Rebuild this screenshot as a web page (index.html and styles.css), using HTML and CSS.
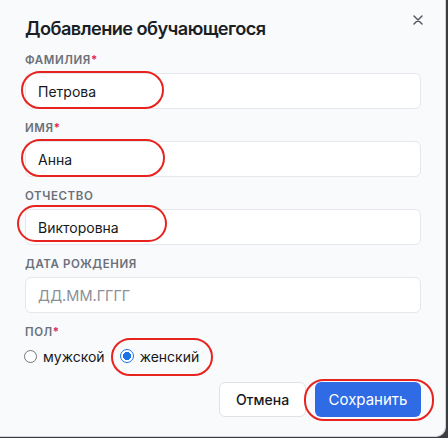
FILE: index.html
```html
<!DOCTYPE html>
<html lang="ru">
<head>
<meta charset="utf-8">
<title>Добавление обучающегося</title>
<link rel="stylesheet" href="styles.css">
</head>
<body>
<div class="modal">
  <div class="header">
    <h2 class="title">Добавление обучающегося</h2>
    <button class="close" aria-label="Закрыть">
      <svg width="10" height="10" viewBox="0 0 10 10"><path d="M1 1L9 9M9 1L1 9" stroke="#55595f" stroke-width="1.5" stroke-linecap="round"/></svg>
    </button>
  </div>
  <div class="field">
    <label class="label">Фамилия<span class="req">*</span></label>
    <div class="input">Петрова</div>
  </div>
  <div class="field">
    <label class="label">Имя<span class="req">*</span></label>
    <div class="input">Анна</div>
  </div>
  <div class="field">
    <label class="label">Отчество</label>
    <div class="input">Викторовна</div>
  </div>
  <div class="field">
    <label class="label">Дата рождения</label>
    <div class="input placeholder">ДД.ММ.ГГГГ</div>
  </div>
  <div class="field gender">
    <label class="label">Пол<span class="req">*</span></label>
    <div class="radios">
      <label class="radio"><span class="dot"></span>мужской</label>
      <label class="radio checked"><span class="dot"></span>женский</label>
    </div>
  </div>
  <div class="actions">
    <button class="btn cancel">Отмена</button>
    <button class="btn save">Сохранить</button>
  </div>

  <span class="mark m1"></span>
  <span class="mark m2"></span>
  <span class="mark m3"></span>
  <span class="mark m4"></span>
  <span class="mark m5"></span>
</div>
</body>
</html>
```
FILE: styles.css
```css
* { box-sizing: border-box; }
html, body { margin: 0; }
body {
  background: #3b3d42;
  width: 448px;
  height: 438px;
  overflow: hidden;
  font-family: Inter, "Noto Sans", sans-serif;
}
.modal {
  position: relative;
  width: 446px;
  height: 437px;
  background: #f8fafc;
  border-right: 1px solid #cfd4dc;
  border-bottom: 1px solid #cfd4dc;
  border-bottom-right-radius: 10px;
  padding: 14px 24px 0 25px;
}
.header {
  display: flex;
  justify-content: space-between;
  align-items: flex-start;
  height: 28px;
  margin-bottom: 10px;
}
.title {
  margin: 0;
  font-size: 18.2px;
  line-height: 28px;
  font-weight: 600;
  color: #1b1f24;
  letter-spacing: -0.55px;
}
.close {
  border: 0;
  background: none;
  padding: 0;
  width: 10px;
  height: 10px;
  margin-top: 1px;
  margin-right: -2px;
  display: flex;
}
.field {
  display: flex;
  flex-direction: column;
  gap: 5px;
  margin-bottom: 11px;
}
.label {
  font-size: 11.5px;
  line-height: 16px;
  font-weight: 600;
  text-transform: uppercase;
  letter-spacing: 0.6px;
  color: #6b7079;
}
.req { color: #e11d48; }
.input {
  height: 36px;
  background: #ffffff;
  border: 1px solid #e4e7ec;
  border-radius: 6px;
  padding: 0 12px;
  display: flex;
  align-items: center;
  font-size: 14px;
  color: #16181c;
}
.placeholder { color: #8a8f98; font-size: 14.5px; }
.gender { gap: 6px; margin-bottom: 16px; }
.radios {
  display: flex;
  gap: 16px;
  height: 20px;
  align-items: center;
}
.radio {
  display: flex;
  align-items: center;
  gap: 6px;
  font-size: 14px;
  color: #16181c;
}
.dot {
  width: 13px;
  height: 13px;
  border-radius: 50%;
  border: 1px solid #767676;
  background: #fff;
  margin-left: -1px;
}
.checked .dot {
  width: 14px;
  height: 14px;
  border: 1.5px solid #1a73e8;
  background: radial-gradient(circle, #1a73e8 0 3.8px, #fff 4.3px);
}
.actions {
  display: flex;
  justify-content: flex-end;
  gap: 9px;
}
.btn {
  height: 35px;
  border-radius: 6px;
  font-family: inherit;
  font-size: 14px;
  font-weight: 500;
  padding: 0;
}
.cancel {
  width: 87px;
  background: #fff;
  border: 1px solid #dfe2e7;
  color: #16181c;
}
.save {
  width: 106px;
  background: #2e6be5;
  border: 0;
  color: #fff;
  font-size: 15px;
  font-weight: 400;
}
.mark {
  position: absolute;
  border: 2px solid #e8231f;
  border-radius: 20px;
}
.m1 { left: 21px; top: 71px; width: 143px; height: 38px; }
.m2 { left: 21px; top: 139px; width: 144px; height: 38px; }
.m3 { left: 17px; top: 205px; width: 150px; height: 37px; }
.m4 { left: 111px; top: 338px; width: 102px; height: 38px; }
.m5 { left: 304px; top: 379px; width: 130px; height: 42px; }
```
